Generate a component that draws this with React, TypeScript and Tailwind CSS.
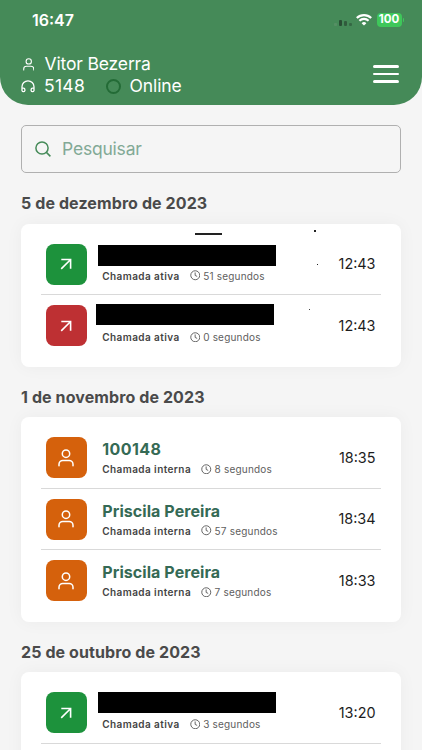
import React from "react";

type Call = {
  kind: "out" | "missed" | "internal";
  name?: string;
  redaction?: string;
  duration: string;
  time: string;
};

const groups: { date: string; continues?: boolean; calls: Call[] }[] = [
  {
    date: "5 de dezembro de 2023",
    calls: [
      { kind: "out", redaction: "-ml-[4.6px] mt-[1.5px]", duration: "51 segundos", time: "12:43" },
      { kind: "missed", redaction: "-ml-[6.6px] -mt-[1.25px]", duration: "0 segundos", time: "12:43" },
    ],
  },
  {
    date: "1 de novembro de 2023",
    calls: [
      { kind: "internal", name: "100148", duration: "8 segundos", time: "18:35" },
      { kind: "internal", name: "Priscila Pereira", duration: "57 segundos", time: "18:34" },
      { kind: "internal", name: "Priscila Pereira", duration: "7 segundos", time: "18:33" },
    ],
  },
  {
    date: "25 de outubro de 2023",
    continues: true,
    calls: [{ kind: "out", redaction: "-ml-[4px] mt-0", duration: "3 segundos", time: "13:20" }],
  },
];

const tileColor = { out: "bg-[#1d923c]", missed: "bg-[#be3033]", internal: "bg-[#d5610c]" };

function UserIcon({ className }: { className: string }) {
  return (
    <svg className={className} viewBox="0 0 16 18" fill="none" stroke="currentColor" strokeWidth="1.5" strokeLinecap="round">
      <circle cx="8" cy="4.7" r="3.7" />
      <path d="M1 16.7v-1.5a3.8 3.8 0 0 1 3.8-3.8h6.4a3.8 3.8 0 0 1 3.8 3.8v1.5" />
    </svg>
  );
}

function CallRow({ call, divider }: { call: Call; divider: boolean }) {
  return (
    <div
      className={`flex h-[61.5px] items-center border-b pl-[5px] pr-[5.5px] pt-px ${
        divider ? "border-[#d9d9d9]" : "border-transparent"
      }`}
    >
      <div className={`flex size-[41px] shrink-0 items-center justify-center rounded-[8px] text-white ${tileColor[call.kind]}`}>
        {call.kind === "internal" ? (
          <UserIcon className="ml-[-1px] h-[18px] w-4" />
        ) : (
          <svg className="ml-[-1px] size-3" viewBox="0 0 12 12" fill="none" stroke="currentColor" strokeWidth="1.6">
            <path d="M1.3 1.5h9.3v9.2M10.4 1.7 1.2 10.9" />
          </svg>
        )}
      </div>
      <div className="ml-[15.75px] flex h-[41px] w-[220px] flex-col">
        {call.redaction ? (
          <div className={`h-[20.5px] w-[178px] shrink-0 bg-black ${call.redaction}`} />
        ) : (
          <div className="h-[22.5px] whitespace-nowrap text-[16px] font-bold leading-[25px] text-[#356a55]">
            <span className={call.name === "100148" ? "tracking-[0.4px]" : "tracking-[0.07px]"}>{call.name}</span>
          </div>
        )}
        <div className="mt-auto flex h-[18px] items-center whitespace-nowrap text-[10px] leading-[18px] text-[#606060]">
          <span className="font-semibold tracking-[0.42px] text-[#444]">
            {call.kind === "internal" ? "Chamada interna" : "Chamada ativa"}
          </span>
          <svg className="mb-px ml-[10px] mr-[3px] size-[10.5px]" viewBox="0 0 11 11" fill="none" stroke="currentColor" strokeWidth="1">
            <circle cx="5.5" cy="5.5" r="4.7" />
            <path d="M5.4 2.6v3.1l2.1 1" />
          </svg>
          <span className="tracking-[0.2px]">{call.duration}</span>
        </div>
      </div>
      <time className="ml-auto text-[14.4px] text-[#1d1d1d]">{call.time}</time>
    </div>
  );
}

export default function App() {
  return (
    <main className="relative h-[750px] w-full overflow-hidden bg-[#f5f5f5] font-['Inter','Liberation_Sans',sans-serif]">
      <header className="h-[104.5px] rounded-b-[28px] bg-[#458a58] text-white">
        <div className="flex h-10 items-center pl-8 pr-[18px]">
          <span className="text-[16px] font-semibold">16:47</span>
          <div className="ml-auto flex items-center">
            <div className="mr-[4px] mt-[6px] flex items-end gap-[2px]">
              <i className="size-[3px] rounded-[1px] bg-[#568f64]" />
              <i className="h-[6px] w-[3.5px] rounded-[1px] bg-[#294e34]" />
              <i className="h-[5px] w-[3px] rounded-[1px] bg-[#315b3d]" />
              <i className="size-[3px] rounded-[1px] bg-[#356844]" />
            </div>
            <svg className="mr-[5px] h-3 w-4" viewBox="0 0 16 12" fill="none" stroke="white" strokeWidth="2.1">
              <path d="M.8 4.1a10.2 10.2 0 0 1 14.4 0M3.4 6.8a6.5 6.5 0 0 1 9.2 0" />
              <path d="M5.6 9.2a3.5 3.5 0 0 1 4.8 0L8 11.6Z" fill="white" stroke="none" />
            </svg>
            <span className="flex h-[14px] w-[25px] items-center justify-center rounded-[4px] bg-[#3ec75a] pr-px text-[11.5px] font-bold leading-none">100</span>
            <i className="ml-px h-1 w-px rounded-r-full bg-[#3ec75a]" />
          </div>
        </div>
        <div className="flex items-center justify-between pl-[21px] pr-[23px] pt-[13px]">
          <div className="text-[17.5px] leading-[22px]">
            <div className="flex items-center">
              <UserIcon className="ml-[1.5px] mr-[10.5px] h-[13px] w-[11.5px]" />
              <span className="tracking-[-0.15px]">Vitor Bezerra</span>
            </div>
            <div className="flex items-center">
              <svg className="mr-[9px] h-[13px] w-[14px]" viewBox="0 0 14 13" fill="none" stroke="white" strokeWidth="1.3">
                <path d="M1 9V6.8a6 6 0 0 1 12 0V9M1 8.2h1.4a1.5 1.5 0 0 1 1.5 1.5v.9a1.5 1.5 0 0 1-2.9 0ZM13 8.2h-1.4a1.5 1.5 0 0 0-1.5 1.5v.9a1.5 1.5 0 0 0 2.9 0Z" />
              </svg>
              <span className="w-[62px] tracking-[0.3px]">5148</span>
              <i className="mr-[8.5px] size-[15px] rounded-full border-2 border-[#236b36]" />
              <span className="tracking-[-0.1px]">Online</span>
            </div>
          </div>
          <button className="mt-[-2px] flex w-[26px] flex-col gap-[5px]" aria-label="Menu">
            <i className="h-[2.5px] w-full rounded-full bg-white" />
            <i className="h-[2.5px] w-full rounded-full bg-white" />
            <i className="h-[2.5px] w-full rounded-full bg-white" />
          </button>
        </div>
      </header>
      <div className="pl-[20.5px] pr-[21px] pt-[20.5px]">
        <label className="flex h-[48px] items-center rounded-[5px] border border-[#b0b0b0] pl-[13px]">
          <svg className="size-4 text-[#458a58]" viewBox="0 0 16 16" fill="none" stroke="currentColor" strokeWidth="1.5">
            <circle cx="7" cy="7" r="6.1" />
            <path d="m11.4 11.4 4 4" />
          </svg>
          <span className="ml-[11.5px] text-[17.5px] tracking-[-0.2px] text-[#82a995]">Pesquisar</span>
        </label>
        {groups.map((g) => (
          <section key={g.date}>
            <h2 className="h-[50.5px] pl-[0.5px] pt-[18px] text-[16px] font-bold leading-[25px] tracking-[0.1px] text-[#4a4a4a]">{g.date}</h2>
            <div className="rounded-[8px] bg-white px-5 py-[10px] shadow-[0_0_18px_rgba(0,0,0,0.045)]">
              {g.calls.map((c, i) => (
                <CallRow key={i} call={c} divider={g.continues || i < g.calls.length - 1} />
              ))}
              {g.continues && <div className="h-[61.5px]" />}
            </div>
          </section>
        ))}
      </div>
      <i className="absolute left-[195px] top-[233px] h-[1.5px] w-[27px] bg-[#222]" />
      <i className="absolute left-[314px] top-[230px] size-[2px] bg-[#222]" />
      <i className="absolute left-[317px] top-[264px] size-px bg-[#222]" />
      <i className="absolute left-[309px] top-[309px] size-px bg-[#444]" />
    </main>
  );
}
